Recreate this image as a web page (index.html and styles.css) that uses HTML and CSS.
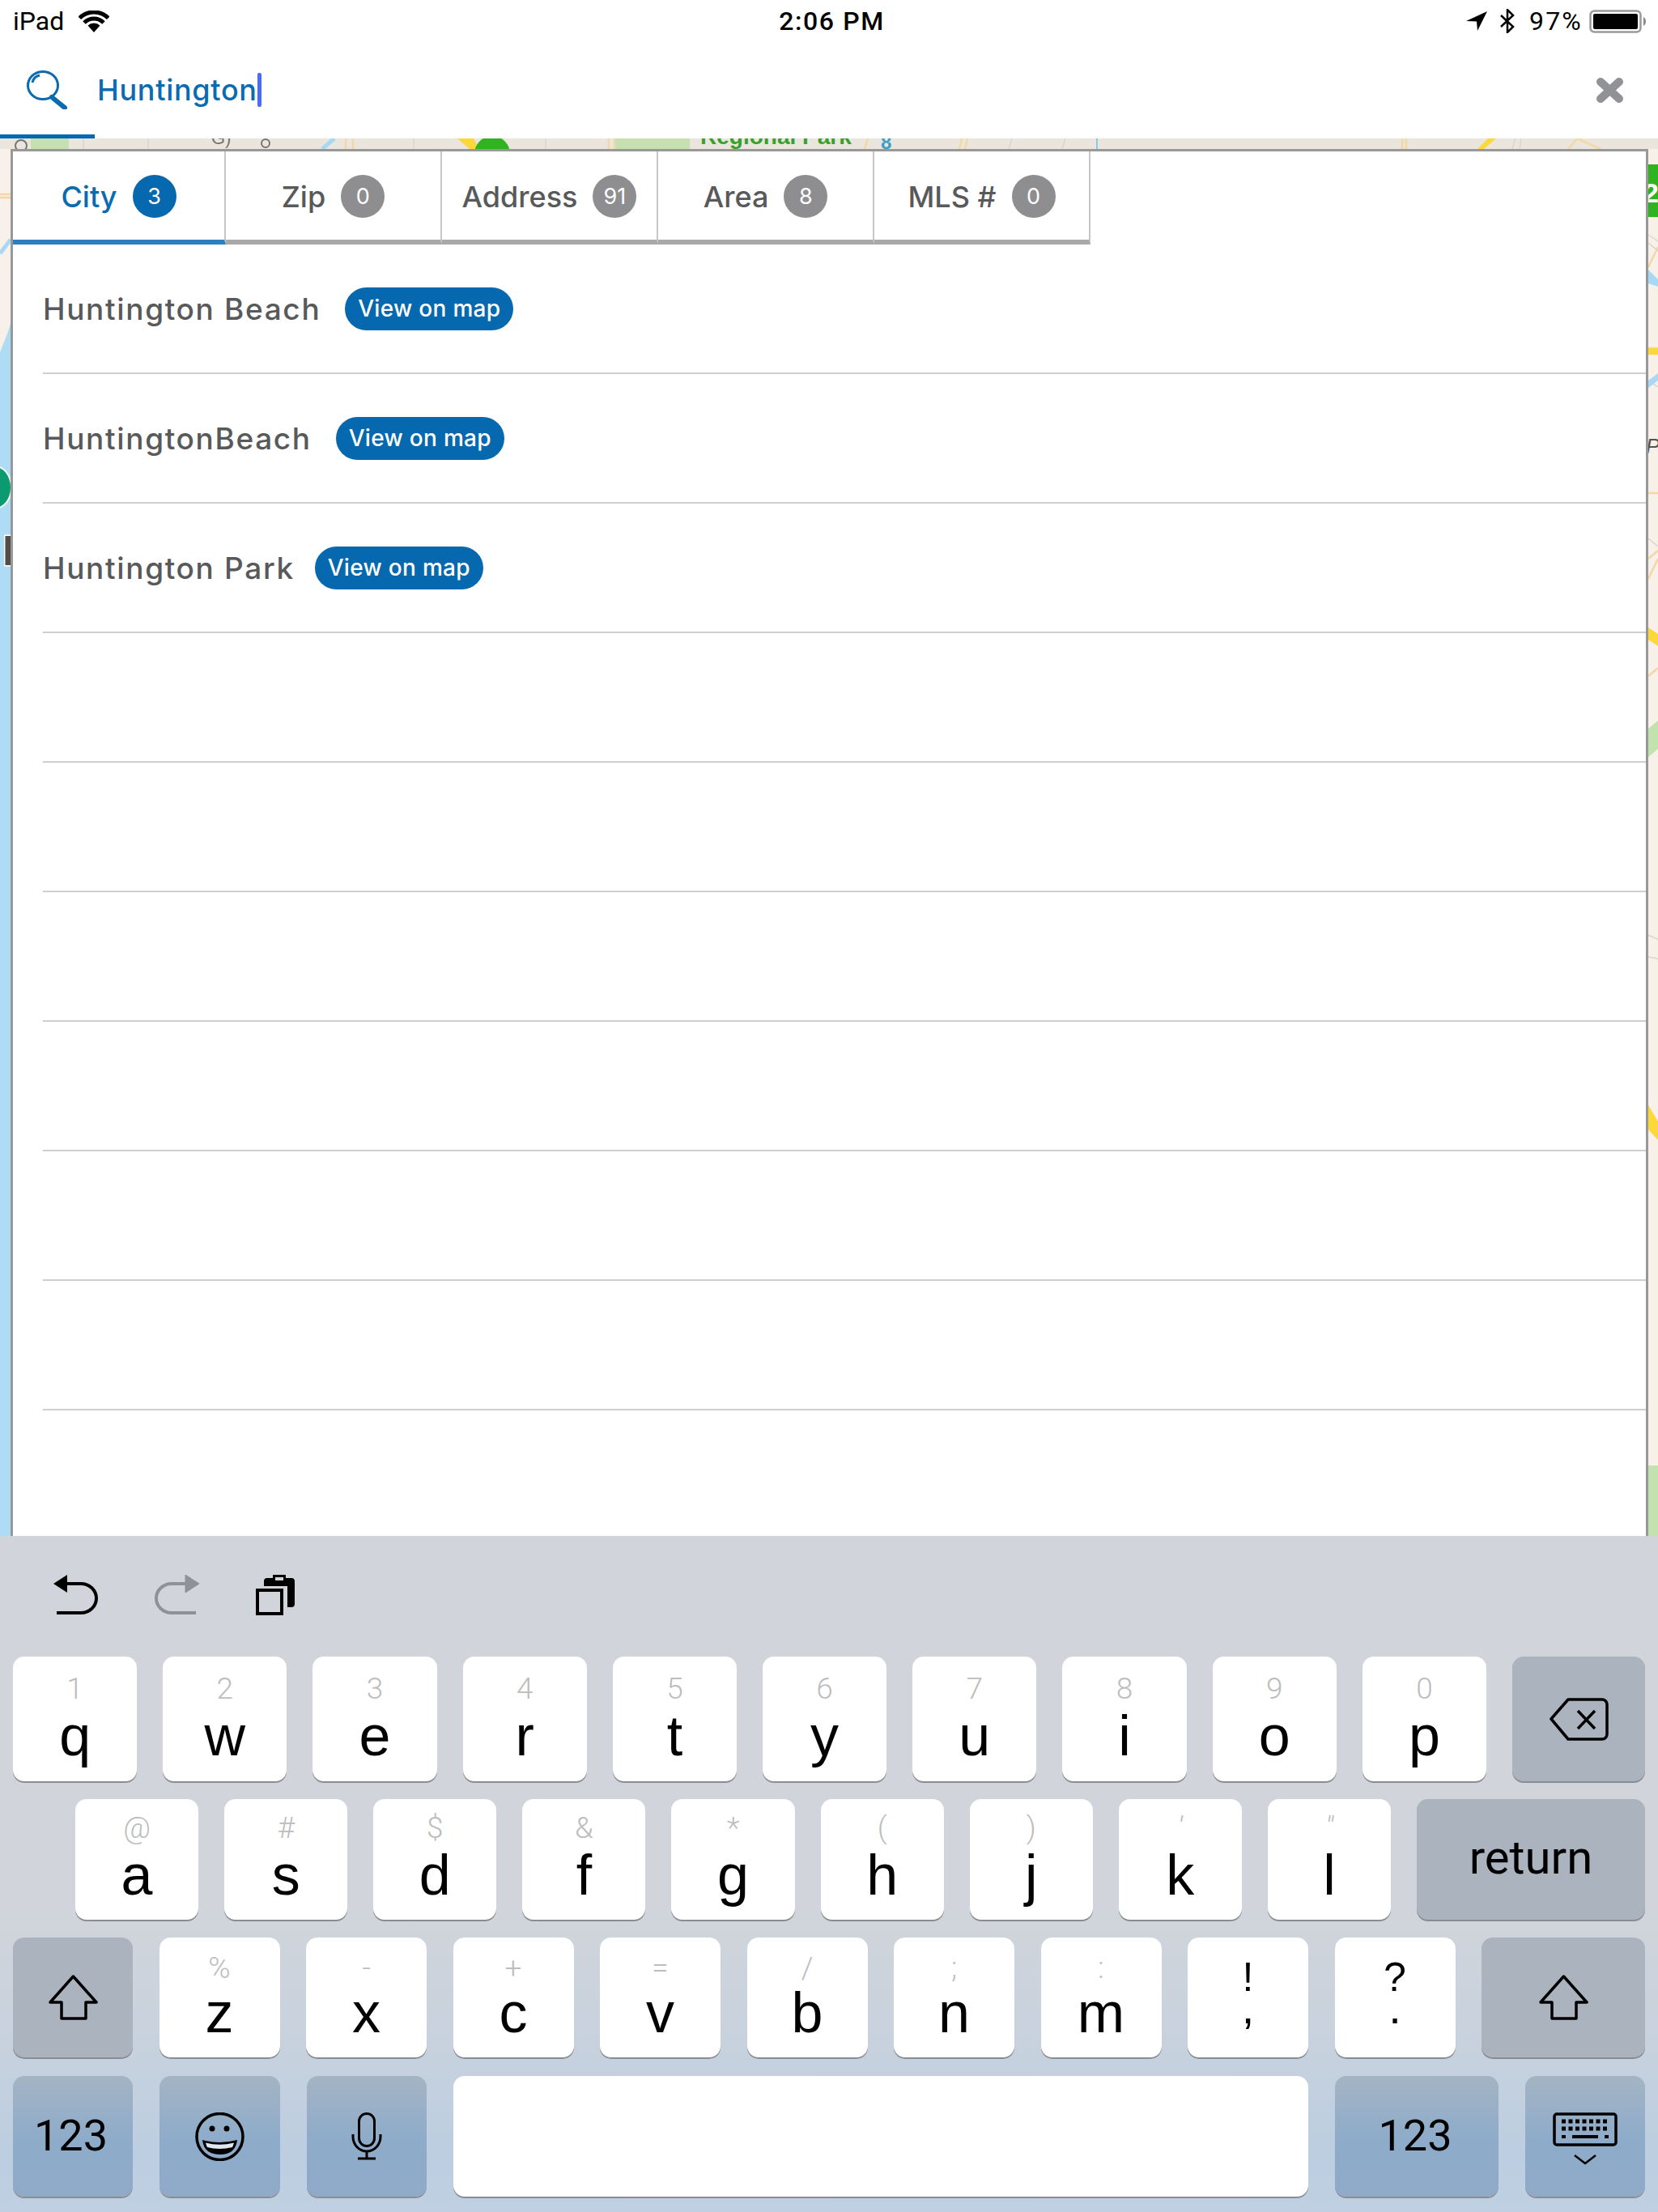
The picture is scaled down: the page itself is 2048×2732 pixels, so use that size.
FILE: index.html
```html
<!DOCTYPE html>
<html lang="en">
<head>
<meta charset="utf-8">
<title>Search</title>
<link rel="stylesheet" href="styles.css">
</head>
<body>
<div class="screen">
  <header class="header">
    <div class="status">
      <div class="status-left">
        <span class="status-text">iPad</span>
        <svg class="icon-wifi" viewBox="0 0 38 27"><path class="wifi-arc" d="M1.3 9.3A25 25 0 0 1 36.7 9.3"/><path class="wifi-arc" d="M7 15A17 17 0 0 1 31 15"/><path class="wifi-dot" d="M19 27L11.5 18.5A11 11 0 0 1 26.500 18.500Z"/></svg>
      </div>
      <span class="status-time">2:06 PM</span>
      <div class="status-right">
        <svg class="icon-location" viewBox="0 0 26 24"><path d="M26 0L0 12L13 12.500L14 24Z"/></svg>
        <svg class="icon-bluetooth" viewBox="0 0 20 30"><path d="M2 8L17 22L10 29V1L17 8L2 22"/></svg>
        <span class="status-text status-pct">97%</span>
        <svg class="icon-battery" viewBox="0 0 70 29"><rect class="bat-shell" x="1.500" y="1.500" width="62" height="26" rx="5"/><rect x="5" y="5" width="55" height="19" rx="2"/><path class="bat-nub" d="M67 9C69 10 70 12 70 14.500C70 17 69 19 67 20Z"/></svg>
      </div>
    </div>
    <div class="search">
      <svg class="icon-search" viewBox="0 0 50 48"><ellipse cx="20" cy="18.500" rx="18.500" ry="17"/><path d="M7 15C8 10 11 7 16 6"/><path class="search-handle" d="M31 33L47 46"/></svg>
      <span class="search-text">Huntington</span><span class="caret"></span>
      <svg class="icon-close" viewBox="0 0 33 31"><path d="M5 5L28 26M28 5L5 26"/></svg>
    </div>
    <div class="header-mark"></div>
  </header>

  <main class="stage">
    <svg class="map" viewBox="0 171 2048 1726" preserveAspectRatio="none">
      <rect x="0" y="171" width="2048" height="1726" fill="#f8f1e9"/>
      <rect x="0" y="171" width="2048" height="13" fill="#eae6de"/>
      <rect x="38" y="171" width="47" height="13" fill="#c6e0b2"/>
      <rect x="760" y="171" width="92" height="13" fill="#c6e0b2"/>
      <circle cx="26" cy="180" r="7" fill="none" stroke="#77756f" stroke-width="2"/>
      <text class="map-label map-label--gray" x="261" y="178">G)</text>
      <circle cx="328" cy="177" r="5" fill="none" stroke="#77756f" stroke-width="2"/>
      <path class="road-blue" d="M398 184L413 171"/>
      <path class="road-orange" d="M427 171V184M436 171V184M752 171V184M759 171V184M1072 171L1068 184M1188 171L1185 184M1195 171L1192 184M1732 171V184M1737 171V184M1937 184L1948 171L1977 184"/>
      <path class="road-gray" d="M103 171V184M183 171V184M511 171V184M674 171V184M1250 171L1246 184M1316 171L1312 184M1868 184L1872 171M1877 184L1879 171"/>
      <path class="road-yellow" d="M565 171H585L592 184H580Z"/>
      <path class="road-yellow" d="M1838 171H1848L1833 184H1825Z"/>
      <circle cx="608" cy="190" r="22" fill="#2fb31f"/>
      <text class="map-label map-label--park" x="865" y="178">Regional Park</text>
      <text class="map-label map-label--water" x="1088" y="184">8</text>
      <path class="road-blue-thin" d="M1355 171V184"/>

      <path d="M0 435L13 445V400L9 412L0 435V1897H13V440Z" fill="#aedcf5"/>
      <path class="road-blue" d="M0 313L13 296"/>
      <path class="road-orange" d="M0 240H13M0 244H13"/>
      <ellipse cx="-6" cy="602" rx="20" ry="26" fill="#0c9a70" stroke="#f4f4f4" stroke-width="2"/>
      <text class="map-label map-label--h" x="3" y="698">H</text>

      <rect x="2036" y="203" width="12" height="65" fill="#2fb31f"/>
      <text class="map-label map-label--badge" x="2030" y="250">2</text>
      <path class="road-orange" d="M2036 330L2048 305M2036 430H2048M2036 437H2048M2036 609H2048M2036 715L2048 690M2036 690L2048 680M2036 835L2048 825"/>
      <path class="road-gray" d="M2036 290L2048 298M2036 300L2048 310M2036 470L2048 478M2036 665L2048 675M2036 1155L2048 1160M2036 1182L2048 1184"/>
      <path d="M2036 333L2048 345V354L2036 350Z" fill="#a8d8f3"/>
      <path d="M2036 470L2048 461V470L2036 479Z" fill="#a8d8f3"/>
      <rect x="2036" y="430" width="12" height="8" fill="#fcd83a"/>
      <path d="M2036 775L2048 783V798L2036 790Z" fill="#fcd83a"/>
      <path d="M2036 1365L2048 1385V1408L2036 1395Z" fill="#fcd83a"/>
      <path d="M2036 900L2048 890V925L2036 935Z" fill="#c2e2ae"/>
      <path d="M2036 1810H2048V1897H2036Z" fill="#c2e2ae"/>
      <text class="map-label map-label--pa" x="2033" y="560">Pa</text>
    </svg>

    <section class="panel">
      <nav class="tabs">
        <a class="tab tab--active"><span>City</span><b class="badge badge--active">3</b></a>
        <a class="tab"><span>Zip</span><b class="badge">0</b></a>
        <a class="tab"><span>Address</span><b class="badge">91</b></a>
        <a class="tab"><span>Area</span><b class="badge">8</b></a>
        <a class="tab"><span>MLS #</span><b class="badge">0</b></a>
      </nav>
      <ul class="results">
        <li class="result"><span>Huntington Beach</span><a class="pill">View on map</a></li>
        <li class="result"><span>HuntingtonBeach</span><a class="pill">View on map</a></li>
        <li class="result result--tight"><span>Huntington Park</span><a class="pill">View on map</a></li>
        <li class="result"></li>
        <li class="result"></li>
        <li class="result"></li>
        <li class="result"></li>
        <li class="result"></li>
        <li class="result"></li>
      </ul>
    </section>
  </main>

  <footer class="keyboard">
    <div class="kb-tools">
      <svg class="tool" viewBox="0 0 55 50"><path class="tool-stroke" d="M14 11H34A19 18 0 0 1 34 47H4"/><path d="M0 11L17 0V22Z"/></svg>
      <svg class="tool tool--off" viewBox="0 0 55 50"><g transform="matrix(-1 0 0 1 55 0)"><path class="tool-stroke" d="M14 11H34A19 18 0 0 1 34 47H4"/><path d="M0 11L17 0V22Z"/></g></svg>
      <svg class="tool tool--clip" viewBox="0 0 48 50"><path class="tool-stroke tool-stroke--sq" d="M2 19H32V48H2Z"/><path d="M10 14V8A4 4 0 0 1 14 4H21V0H37V4H44A4 4 0 0 1 48 8V36A4 4 0 0 1 44 40H39V14Z"/><rect class="clip-window" x="24" y="3" width="10" height="4"/></svg>
    </div>

    <div class="kb-row kb-row--first">
      <div class="key"><i>1</i><b>q</b></div>
      <div class="key"><i>2</i><b>w</b></div>
      <div class="key"><i>3</i><b>e</b></div>
      <div class="key"><i>4</i><b>r</b></div>
      <div class="key"><i>5</i><b>t</b></div>
      <div class="key"><i>6</i><b>y</b></div>
      <div class="key"><i>7</i><b>u</b></div>
      <div class="key"><i>8</i><b>i</b></div>
      <div class="key"><i>9</i><b>o</b></div>
      <div class="key"><i>0</i><b>p</b></div>
      <div class="key key--fn key--delete">
        <svg class="kicon kicon--delete" viewBox="0 0 73 53"><path d="M2 26L23 2H65A6 6 0 0 1 71 8V45A6 6 0 0 1 65 51H23Z"/><path d="M35 16L56 38M56 16L35 38"/></svg>
      </div>
    </div>

    <div class="kb-row kb-row--second">
      <div class="key"><i>@</i><b>a</b></div>
      <div class="key"><i>#</i><b>s</b></div>
      <div class="key"><i>$</i><b>d</b></div>
      <div class="key"><i>&amp;</i><b>f</b></div>
      <div class="key"><i>*</i><b>g</b></div>
      <div class="key"><i>(</i><b>h</b></div>
      <div class="key"><i>)</i><b>j</b></div>
      <div class="key"><i class="hint-slant">′</i><b>k</b></div>
      <div class="key"><i class="hint-slant">″</i><b>l</b></div>
      <div class="key key--fn key--return"><span class="key-word">return</span></div>
    </div>

    <div class="kb-row kb-row--third">
      <div class="key key--fn key--shift-l">
        <svg class="kicon kicon--shift" viewBox="0 0 61 56"><path d="M30.500 2L59 34H46V54H16V34H2Z"/></svg>
      </div>
      <div class="key"><i>%</i><b>z</b></div>
      <div class="key"><i>-</i><b>x</b></div>
      <div class="key"><i>+</i><b>c</b></div>
      <div class="key"><i>=</i><b>v</b></div>
      <div class="key"><i>/</i><b>b</b></div>
      <div class="key"><i>;</i><b>n</b></div>
      <div class="key"><i>:</i><b>m</b></div>
      <div class="key key--punct"><i>!</i><b>,</b></div>
      <div class="key key--punct"><i>?</i><b>.</b></div>
      <div class="key key--fn key--shift-r">
        <svg class="kicon kicon--shift" viewBox="0 0 61 56"><path d="M30.500 2L59 34H46V54H16V34H2Z"/></svg>
      </div>
    </div>

    <div class="kb-row kb-row--fourth">
      <div class="key key--blue key--small"><span class="key-num">123</span></div>
      <div class="key key--blue key--emoji">
        <svg class="kicon kicon--emoji" viewBox="0 0 61 60"><ellipse class="face" cx="30.500" cy="30" rx="28.500" ry="28.500"/><circle cx="21" cy="20" r="3.500"/><circle cx="39" cy="20" r="3.500"/><path d="M9 34Q30 40 52 34Q50 52 30.500 52Q11 52 9 34Z"/><path class="teeth" d="M13 37.500Q30 42 48 37.500Q47 41 46 43Q30 47 15 43Q14 41 13 37.500Z"/></svg>
      </div>
      <div class="key key--blue key--small">
        <svg class="kicon kicon--mic" viewBox="0 0 38 59"><rect x="9.500" y="1.500" width="19" height="40" rx="9.500"/><path d="M2 27V30A17 18 0 0 0 36 30V27M19 48V57M8 57H30"/></svg>
      </div>
      <div class="key key--space"></div>
      <div class="key key--blue key--num-r"><span class="key-num">123</span></div>
      <div class="key key--blue key--small">
        <svg class="kicon kicon--kb" viewBox="0 0 80 66"><rect class="kb-shell" x="2" y="2" width="76" height="38" rx="3"/><path class="kb-dots" d="M11 11H69M11 20H69"/><path class="kb-bar" d="M11 30H16M24 30H56M64 30H69"/><path class="kb-chev" d="M27 53L40 63L53 53"/></svg>
      </div>
    </div>
  </footer>
</div>
</body>
</html>
```
FILE: styles.css
```css
* { box-sizing: border-box; }
html, body { margin: 0; padding: 0; background: #fff; }
body { font-family: "Inter", "Liberation Sans", sans-serif; }
.screen { width: 2048px; height: 2732px; display: flex; flex-direction: column; overflow: hidden; }

/* header */
.header { height: 171px; background: #fff; flex: none; }
.status { height: 52px; display: grid; grid-template-columns: 1fr auto 1fr; align-items: center; padding: 0 15px 0 16px; font-family: "Roboto", sans-serif; color: #000; }
.status-left { display: flex; align-items: center; gap: 18px; }
.status-right { display: flex; align-items: center; justify-content: flex-end; }
.status-text { font-size: 32px; line-height: 52px; }
.status-time { font-size: 32px; font-weight: 500; line-height: 52px; letter-spacing: 1.600px; margin-left: 6px; }
.status-pct { margin: 0 8px 0 17px; letter-spacing: 2.200px; }
.icon-wifi { width: 38px; height: 27px; }
.wifi-arc { fill: none; stroke: #000; stroke-width: 5; }
.icon-location { width: 26px; height: 24px; margin-right: 15px; }
.icon-bluetooth { width: 20px; height: 30px; fill: none; stroke: #000; stroke-width: 2.500; }
.icon-battery { width: 70px; height: 29px; }
.bat-shell { fill: none; stroke: #9a9a9a; stroke-width: 2.500; }
.bat-nub { fill: #8a8a8a; }

.search { height: 114px; display: flex; align-items: center; padding: 4px 43px 0 33px; color: #0b6bb0; }
.icon-search { width: 50px; height: 48px; flex: none; fill: none; stroke: #0b6bb0; stroke-width: 3; margin-right: 37px; }
.search-handle { stroke-width: 6; stroke-linecap: round; }
.search-text { font-size: 36px; line-height: 44px; font-weight: 500; letter-spacing: 0.700px; }
.caret { width: 5px; height: 42px; background: #4a6cf0; border-radius: 2px; }
.icon-close { width: 33px; height: 31px; margin-left: auto; fill: none; stroke: #909296; stroke-width: 10; stroke-linecap: round; }
.header-mark { width: 117px; height: 5px; background: #0668ae; }

/* stage */
.stage { height: 1726px; flex: none; position: relative; overflow: hidden; padding: 13px 12px 0 13px; }
.map { position: absolute; left: 0; top: 0; width: 2048px; height: 1726px; }
.road-blue { stroke: #a8d8f3; stroke-width: 5; fill: none; }
.road-blue-thin { stroke: #8cc8ea; stroke-width: 2; fill: none; }
.road-orange { stroke: #f3d8a6; stroke-width: 2.500; fill: none; }
.road-gray { stroke: #d8d6d0; stroke-width: 1.500; fill: none; }
.road-yellow { fill: #fcd83a; }
.map-label { font-family: "Liberation Sans", sans-serif; }
.map-label--gray { font-size: 22px; fill: #77756f; }
.map-label--park { font-size: 28px; font-weight: 700; fill: #3aa02c; }
.map-label--water { font-size: 24px; font-weight: 700; fill: #3f9ec8; }
.map-label--h { font-size: 52px; font-weight: 700; fill: #4f4c4a; paint-order: stroke; stroke: #fff; stroke-width: 3; }
.map-label--badge { font-size: 34px; font-weight: 700; fill: #fff; }
.map-label--pa { font-size: 26px; fill: #55534f; font-style: italic; }

.panel { position: relative; height: 1800px; background: #fff; border: 3px solid #98989a; border-bottom: 0; }
.tabs { display: flex; height: 115px; width: 1331px; }
.tab { flex: 0 0 267px; display: flex; align-items: center; justify-content: center; gap: 19px; padding-top: 2px; font-size: 36px; font-weight: 500; color: #58595b; border-right: 2px solid #c6c6c6; border-bottom: 6px solid #a9a9a9; }
.tab:first-child { flex-basis: 263px; }
.tab--active { color: #0b6bb0; border-bottom-color: #2e7fbd; }
.badge { width: 54px; height: 53px; border-radius: 50%; background: #8e8e91; color: #fff; font-size: 27px; font-weight: 400; display: flex; align-items: center; justify-content: center; }
.badge--active { background: #0668ae; }

.results { list-style: none; margin: 0; padding: 0 0 0 37px; }
.result { height: 160px; border-bottom: 2px solid #cfcfcf; display: flex; align-items: center; gap: 30px; font-size: 37px; font-weight: 500; color: #58595b; letter-spacing: 1.650px; }
.result--tight { gap: 25px; }
.pill { width: 208px; height: 53px; border-radius: 27px; background: #0668ae; color: #fff; font-size: 28px; font-weight: 500; letter-spacing: 0.300px; display: flex; align-items: center; justify-content: center; }

/* keyboard */
.keyboard { height: 835px; flex: none; padding: 0 16px; position: relative; background: linear-gradient(#d1d5db 0, #d1d5db 55%, #c9d2dd 72%, #bccee1 92%, #c0d0e2 100%); font-family: "Roboto", sans-serif; color: #000; }
.kb-tools { height: 149px; display: flex; align-items: flex-start; gap: 70px; padding: 48px 0 0 50px; }
.tool { width: 55px; height: 50px; fill: #000; }
.tool--off { fill: #8e9298; stroke: #8e9298; }
.tool--off .tool-stroke { stroke: #8e9298; }
.tool--clip { width: 48px; }
.tool-stroke { fill: none; stroke: #000; stroke-width: 4; }
.clip-window { fill: #d1d5db; }

.kb-row { display: flex; gap: 32px; }
.kb-row--first { height: 154px; margin-bottom: 22px; }
.kb-row--second { height: 149px; margin-bottom: 22px; padding-left: 77px; }
.kb-row--third { height: 148px; margin-bottom: 23px; gap: 32.500px; }
.kb-row--fourth { height: 149px; gap: 33px; }

.key { flex: 1 1 0; min-width: 0; background: #fff; border-radius: 14px; box-shadow: 0 2px 0 #898d93; display: flex; flex-direction: column; align-items: center; padding-top: 18px; }
.key i { font-style: normal; font-weight: 300; font-size: 37px; line-height: 40px; height: 40px; color: #bdbdbd; }
.key .hint-slant { font-style: italic; }
.key b { font-family: "Liberation Sans", sans-serif; font-weight: 400; font-size: 70px; line-height: 64px; margin-top: 3px; }
.kb-row--first .key { padding-top: 20px; }
.kb-row--first .key b { margin-top: 6px; }
.kb-row--second .key { padding-top: 16px; }
.kb-row--second .key b { margin-top: 6px; }

.key--fn { padding: 0; justify-content: center; background: #abb3bf; }
.kb-row--first .key--fn, .kb-row--second .key--fn { padding: 0; }
.key--delete { flex: 0 0 164px; }
.key--return { flex: 0 0 282px; }
.key--shift-l { flex: 0 0 148px; }
.key--shift-r { flex: 0 0 202px; }
.key--blue { padding: 0; justify-content: center; background: linear-gradient(#a4b4c4, #8dabca 55%, #90aac8); }
.key--small { flex: 0 0 148px; }
.key--emoji { flex: 0 0 149px; }
.key--num-r { flex: 0 0 202px; padding-right: 4px; }
.key--space { flex: 1 1 auto; }
.key-word { font-size: 58px; line-height: 60px; margin-bottom: 6px; }
.key-num { font-size: 54px; line-height: 60px; margin-bottom: 2px; }
.key--small .key-num { margin-right: 5px; }
.key--punct i { color: #000; font-family: "Liberation Sans", sans-serif; font-size: 50px; font-weight: 400; line-height: 45px; height: 45px; margin-top: 9px; }
.key--punct b { font-size: 56px; line-height: 30px; margin-top: 0; }

.kicon { fill: none; stroke: #000; stroke-width: 3.500; stroke-linejoin: round; }
.kicon--delete { width: 73px; height: 53px; }
.kicon--shift { width: 61px; height: 56px; }
.kicon--emoji { width: 61px; height: 60px; fill: #000; stroke: none; }
.face { fill: none; stroke: #000; stroke-width: 3.500; }
.teeth { fill: #dfe7ef; }
.kicon--mic { width: 38px; height: 59px; stroke-width: 3; }
.kicon--kb { width: 80px; height: 66px; margin-top: 6px; }
.kb-dots { stroke-width: 5; stroke-dasharray: 5 3.500; }
.kb-bar { stroke-width: 4; }
.kb-chev { stroke-width: 2.500; }
```
